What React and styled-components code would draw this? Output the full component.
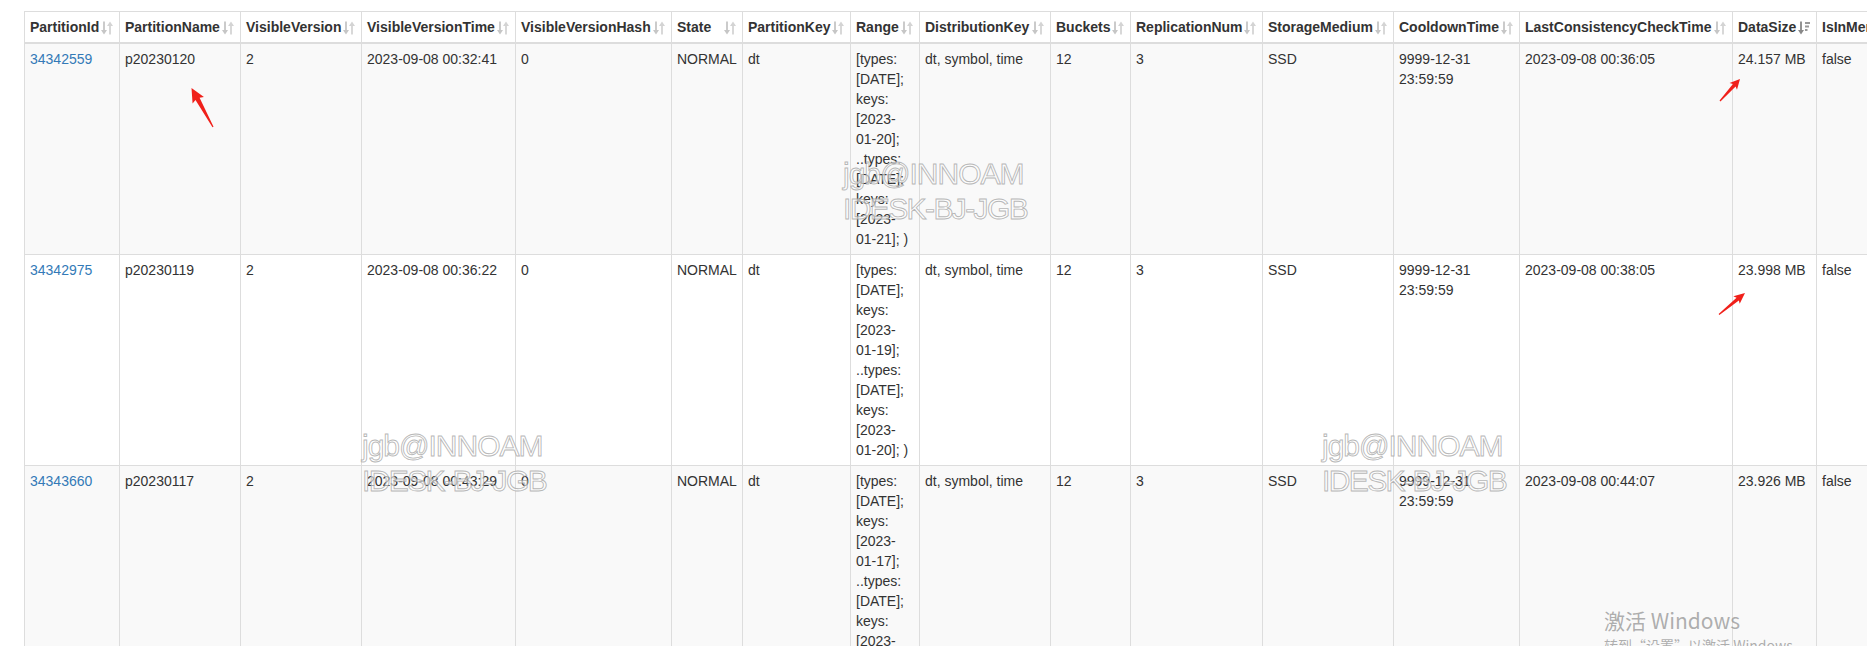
import React from "react";
import styled, { createGlobalStyle } from "styled-components";

const GlobalStyle = createGlobalStyle`
  html, body {
    margin: 0;
    padding: 0;
    overflow: hidden;
    background: #fff;
  }
  body {
    font-family: "Liberation Sans", Arial, Helvetica, sans-serif;
    font-size: 14px;
    line-height: 20px;
    color: #333;
  }
`;

const Page = styled.div`
  position: relative;
  width: 1867px;
  height: 646px;
  overflow: hidden;
  box-sizing: border-box;
  padding: 11px 0 0 24px;
`;

const Table = styled.table`
  border-collapse: collapse;
  border-spacing: 0;
  table-layout: fixed;
  width: ${(p) => p.$w}px;
  border: 1px solid #ddd;
  background: #fff;
`;

const Col = styled.col`
  width: ${(p) => p.$w}px;
`;

const Th = styled.th`
  position: relative;
  padding: 5px 20px 5px 5px;
  text-align: left;
  vertical-align: bottom;
  font-weight: bold;
  color: #333;
  border: 1px solid #ddd;
  border-bottom-width: 2px;
  white-space: nowrap;
  overflow: hidden;
  background: #fff;
`;

const SortIcon = styled.span`
  position: absolute;
  top: 9px;
  right: 6px;
  display: flex;
  line-height: 0;
`;

const Tr = styled.tr`
  background: ${(p) => (p.$striped ? "#f9f9f9" : "#fff")};
`;

const Td = styled.td`
  padding: 5px;
  border: 1px solid #ddd;
  vertical-align: top;
  text-align: left;
  color: #333;
`;

const IdLink = styled.a`
  color: #337ab7;
  text-decoration: none;
`;

const Overlay = styled.svg`
  position: absolute;
  left: 0;
  top: 0;
  pointer-events: none;
`;

const Watermark = styled.div`
  position: absolute;
  left: ${(p) => p.$x}px;
  top: ${(p) => p.$y}px;
  font-family: "Liberation Sans", Arial, sans-serif;
  font-size: 30px;
  line-height: 35px;
  letter-spacing: -1px;
  color: rgba(255, 255, 255, 0.6);
  -webkit-text-stroke: 0.9px rgba(165, 165, 165, 0.8);
  white-space: nowrap;
  pointer-events: none;
`;

const WmLine = styled.div`
  letter-spacing: ${(p) => (p.$tight ? "-1.6px" : "-1px")};
`;

const Activation = styled.div`
  position: absolute;
  left: 1604px;
  top: 606px;
  color: rgba(140, 140, 140, 0.7);
  font-family: "Noto Sans CJK SC", "Liberation Sans", sans-serif;
  white-space: nowrap;
  pointer-events: none;
`;

const ActTitle = styled.div`
  font-size: 21px;
  line-height: 28px;
`;

const ActSub = styled.div`
  font-size: 14px;
  line-height: 22px;
`;

const SortBoth = () => (
  <svg width="12" height="14" viewBox="0 0 12 14">
    <path d="M2.1 0.5h1.8v8.5H6L3 13.5 0 9h2.1z" fill="#c6c6c6" />
    <path d="M8.1 13.5h1.8V5H12L9 0.5 6 5h2.1z" fill="#d4d4d4" />
  </svg>
);

const SortDesc = () => (
  <svg width="12" height="14" viewBox="0 0 12 14">
    <path d="M2.1 0.5h1.8v8.5H6L3 13.5 0 9h2.1z" fill="#888" />
    <rect x="7" y="1" width="5" height="2" fill="#999" />
    <rect x="7" y="4.5" width="4" height="2" fill="#999" />
    <rect x="7" y="8" width="2.5" height="2" fill="#999" />
  </svg>
);

const columns = [
  { name: "PartitionId", w: 95 },
  { name: "PartitionName", w: 121 },
  { name: "VisibleVersion", w: 121 },
  { name: "VisibleVersionTime", w: 154 },
  { name: "VisibleVersionHash", w: 156 },
  { name: "State", w: 71 },
  { name: "PartitionKey", w: 108 },
  { name: "Range", w: 69 },
  { name: "DistributionKey", w: 131 },
  { name: "Buckets", w: 80 },
  { name: "ReplicationNum", w: 132 },
  { name: "StorageMedium", w: 131 },
  { name: "CooldownTime", w: 126 },
  { name: "LastConsistencyCheckTime", w: 213 },
  { name: "DataSize", w: 84, sorted: true },
  { name: "IsInMemory", w: 110 },
  { name: "ReplicaAllocation", w: 170 },
  { name: "IsMutable", w: 90 },
];

const rangeLines = (a, b) => [
  "[types:",
  "[DATE];",
  "keys:",
  "[2023-",
  `${a}];`,
  "..types:",
  "[DATE];",
  "keys:",
  "[2023-",
  `${b}]; )`,
];

const rows = [
  {
    id: "34342559",
    name: "p20230120",
    time: "2023-09-08 00:32:41",
    range: rangeLines("01-20", "01-21"),
    check: "2023-09-08 00:36:05",
    size: "24.157 MB",
  },
  {
    id: "34342975",
    name: "p20230119",
    time: "2023-09-08 00:36:22",
    range: rangeLines("01-19", "01-20"),
    check: "2023-09-08 00:38:05",
    size: "23.998 MB",
  },
  {
    id: "34343660",
    name: "p20230117",
    time: "2023-09-08 00:43:29",
    range: rangeLines("01-17", "01-18"),
    check: "2023-09-08 00:44:07",
    size: "23.926 MB",
  },
];

const Arrow = ({ tip, tail, head = 14, spread = 6.5 }) => {
  const dx = tip[0] - tail[0];
  const dy = tip[1] - tail[1];
  const L = Math.sqrt(dx * dx + dy * dy);
  const ang = (Math.atan2(dy, dx) * 180) / Math.PI;
  const pts = [
    [-L, -0.6],
    [-head + 1.5, -spread * 0.36],
    [-head, -spread],
    [0, 0],
    [-head, spread],
    [-head + 1.5, spread * 0.36],
    [-L, 0.6],
  ]
    .map((p) => p.join(","))
    .join(" ");
  return (
    <polygon
      points={pts}
      fill="#f0201a"
      transform={`translate(${tip[0]} ${tip[1]}) rotate(${ang})`}
    />
  );
};

const totalWidth = columns.reduce((s, c) => s + c.w, 0) + 1;

const Mark = ({ x, y }) => (
  <Watermark $x={x} $y={y}>
    <WmLine>jgb@INNOAM</WmLine>
    <WmLine $tight>IDESK-BJ-JGB</WmLine>
  </Watermark>
);

export default function App() {
  return (
    <>
      <GlobalStyle />
      <Page>
        <Table $w={totalWidth}>
          <colgroup>
            {columns.map((c) => (
              <Col key={c.name} $w={c.w} />
            ))}
          </colgroup>
          <thead>
            <tr>
              {columns.map((c) => (
                <Th key={c.name}>
                  {c.name}
                  <SortIcon>{c.sorted ? <SortDesc /> : <SortBoth />}</SortIcon>
                </Th>
              ))}
            </tr>
          </thead>
          <tbody>
            {rows.map((r, i) => (
              <Tr key={r.id} $striped={i % 2 === 0}>
                <Td>
                  <IdLink href="#">{r.id}</IdLink>
                </Td>
                <Td>{r.name}</Td>
                <Td>2</Td>
                <Td>{r.time}</Td>
                <Td>0</Td>
                <Td>NORMAL</Td>
                <Td>dt</Td>
                <Td>
                  {r.range.map((l, k) => (
                    <React.Fragment key={k}>
                      {k > 0 && <br />}
                      {l}
                    </React.Fragment>
                  ))}
                </Td>
                <Td>dt, symbol, time</Td>
                <Td>12</Td>
                <Td>3</Td>
                <Td>SSD</Td>
                <Td>9999-12-31 23:59:59</Td>
                <Td>{r.check}</Td>
                <Td>{r.size}</Td>
                <Td>false</Td>
                <Td>tag.location.default: 3</Td>
                <Td>true</Td>
              </Tr>
            ))}
          </tbody>
        </Table>

        <Mark x={843} y={156} />
        <Mark x={362} y={428} />
        <Mark x={1322} y={428} />

        <Activation>
          <ActTitle>激活 Windows</ActTitle>
          <ActSub>转到“设置”以激活 Windows。</ActSub>
        </Activation>

        <Overlay width="1867" height="646" viewBox="0 0 1867 646">
          <Arrow tip={[191.5, 88]} tail={[213, 127]} head={14} spread={6.5} />
          <Arrow tip={[1740, 79]} tail={[1720, 101]} head={10} spread={5} />
          <Arrow tip={[1745, 293]} tail={[1719, 314.5]} head={11} spread={5} />
        </Overlay>
      </Page>
    </>
  );
}
